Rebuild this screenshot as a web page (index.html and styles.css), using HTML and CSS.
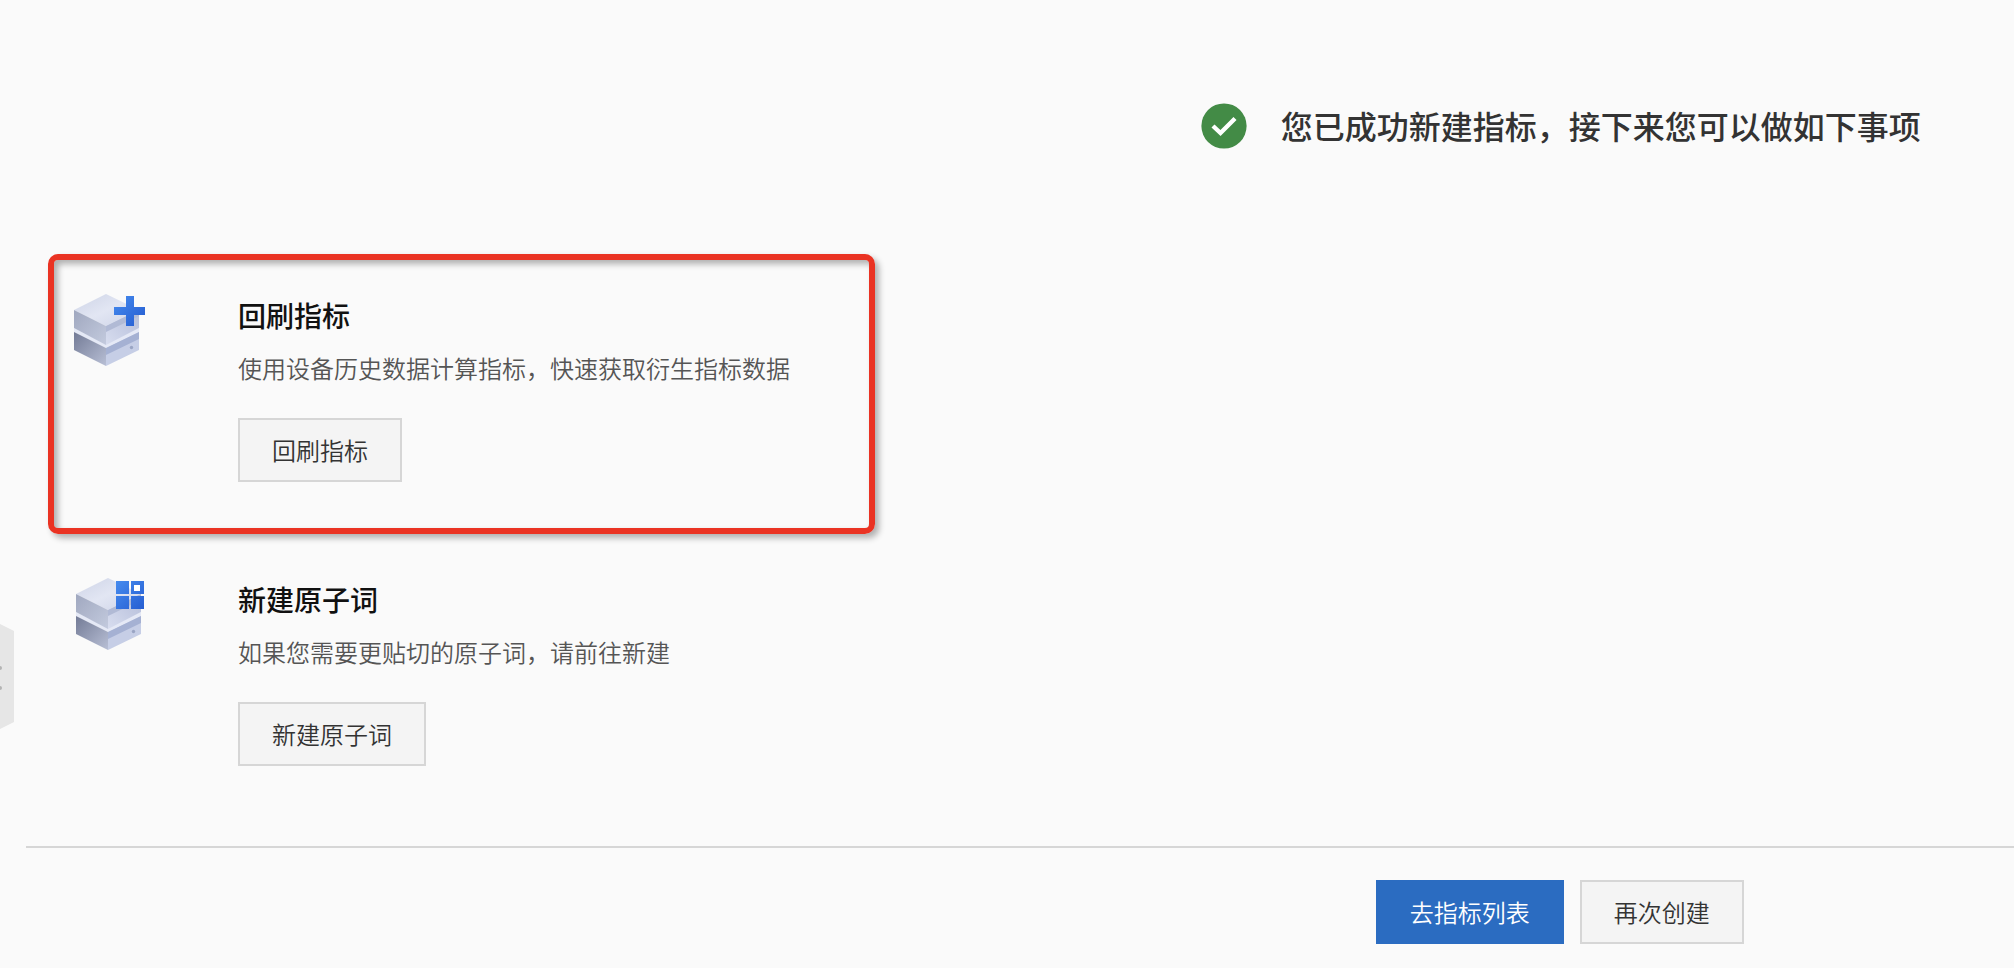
FILE: index.html
```html
<!doctype html>
<html lang="zh-CN">
  <head>
    <meta charset="utf-8">
    <title>新建指标</title>
    <link rel="stylesheet" href="styles.css">
  </head>
  <body>
    <button class="drawer-handle" type="button" aria-label="展开">
      <svg viewBox="0 0 14 106">
        <path d="M0 0L14 7V98L0 105Z" fill="#e6e6e6" />
        <circle cx="0" cy="44" r="2" fill="#b4b4b4" />
        <circle cx="0" cy="64" r="2" fill="#b4b4b4" />
      </svg>
    </button>

    <header class="result">
      <svg class="result-icon" viewBox="0 0 46 46">
        <circle cx="23" cy="23" r="22.6" fill="#438b46" />
        <path d="M12 23L19.5 30L34 15.5" fill="none" stroke="#fff" stroke-width="4.4" />
      </svg>
      <h1>您已成功新建指标，接下来您可以做如下事项</h1>
    </header>

    <main class="actions">
      <section class="action highlighted">
        <svg class="action-icon" viewBox="0 0 72 72">
          <defs>
            <linearGradient id="top" x1="0" y1="0" x2="1" y2="1">
              <stop offset="0" stop-color="#cdd3e6" />
              <stop offset=".5" stop-color="#e2e6f3" />
              <stop offset="1" stop-color="#cdd3e7" />
            </linearGradient>
            <linearGradient id="left" x1="0" y1="0" x2="1" y2="1">
              <stop offset="0" stop-color="#a0a8bf" />
              <stop offset="1" stop-color="#c3cade" />
            </linearGradient>
            <linearGradient id="right" x1="0" y1="1" x2="1" y2="0">
              <stop offset="0" stop-color="#d8ddef" />
              <stop offset="1" stop-color="#b4bdd9" />
            </linearGradient>
            <linearGradient id="dark" x1="0" y1="0" x2="1" y2="1">
              <stop offset="0" stop-color="#737b96" />
              <stop offset="1" stop-color="#b8bfd5" />
            </linearGradient>
            <linearGradient id="blue" gradientUnits="userSpaceOnUse" x1="42" y1="4" x2="70" y2="32">
              <stop offset="0" stop-color="#4489ed" />
              <stop offset="1" stop-color="#245bd0" />
            </linearGradient>
            <g id="server">
              <path d="M0 34V38L32 54L65 38V34L32 50Z" fill="#e5e9f6" />
              <path d="M0 16L32 0L65 16L32 32Z" fill="url(#top)" />
              <path d="M0 16L32 32V51L0 34Z" fill="url(#left)" />
              <path d="M32 32L65 16V34L32 51Z" fill="url(#right)" />
              <path d="M32 32L65 16V22L32 38Z" fill="#b1bad5" />
              <path d="M0 38L32 54V72L0 56Z" fill="url(#dark)" />
              <path d="M32 54L65 38V56L32 72Z" fill="#c6cee6" />
              <path d="M32 54L65 38V45L32 61Z" fill="#a5b1d3" />
              <circle cx="57.5" cy="53.5" r="1.7" fill="#9aa5c4" />
            </g>
          </defs>
          <use href="#server" />
          <path d="M52 2H60V13H71V21H60V32H52V21H40V13H52Z" fill="url(#blue)" />
        </svg>
        <div class="action-body">
          <h2>回刷指标</h2>
          <p>使用设备历史数据计算指标，快速获取衍生指标数据</p>
          <button class="btn" type="button">回刷指标</button>
        </div>
      </section>

      <section class="action">
        <svg class="action-icon" viewBox="-2 0 72 72">
          <use href="#server" />
          <path d="M40 3H53V16H40ZM55 3H68V16H55ZM40 18H53V31H40ZM55 18H68V31H55Z" fill="url(#blue)" />
          <path d="M58 7H64V13H58Z" fill="#fff" />
        </svg>
        <div class="action-body">
          <h2>新建原子词</h2>
          <p>如果您需要更贴切的原子词，请前往新建</p>
          <button class="btn" type="button">新建原子词</button>
        </div>
      </section>
    </main>

    <footer class="footer">
      <button class="btn btn-primary" type="button">去指标列表</button>
      <button class="btn" type="button">再次创建</button>
    </footer>
  </body>
</html>
```
FILE: styles.css
```css
:root {
  --primary: #2b6cc1;
  --background: #fafafa;
  --border: #d6d6d6;
}

* {
  box-sizing: border-box;
}

body {
  margin: 0;
  background: var(--background);
  color: #333;
  font-family: "Noto Sans CJK SC", sans-serif;
  font-size: 24px;
  font-weight: 350;
}

h1,
h2,
p {
  margin: 0;
}

.drawer-handle {
  position: absolute;
  top: 624px;
  left: 0;
  padding: 0;
  border: 0;
  background: none;
  cursor: pointer;
}

.drawer-handle svg {
  display: block;
  width: 14px;
  height: 106px;
}

.result {
  display: flex;
  justify-content: center;
  align-items: center;
  gap: 34px;
  padding: 102px 0 104px 55%;
}

.result-icon {
  flex: none;
  width: 46px;
  height: 46px;
}

h1 {
  padding-bottom: 2px;
  font-size: 32px;
  font-weight: 500;
  line-height: 46px;
  white-space: nowrap;
}

.actions {
  display: flex;
  flex-direction: column;
  gap: 4px;
  padding: 0 48px;
}

.action {
  display: flex;
  gap: 92px;
  max-width: 827px;
  min-height: 280px;
  padding: 34px 20px;
  border: 6px solid transparent;
  border-radius: 10px;
}

.highlighted {
  border-color: #ea3323;
  box-shadow:
    4px 4px 6px rgba(0, 0, 0, 0.3),
    inset 4px 4px 6px rgba(0, 0, 0, 0.3);
}

.action-icon {
  flex: none;
  width: 72px;
  height: 72px;
}

.action-body {
  display: flex;
  flex-direction: column;
  align-items: flex-start;
}

h2 {
  color: #111;
  font-size: 28px;
  font-weight: 500;
  line-height: 42px;
}

p {
  margin: 12px 0 30px;
  color: #555;
  line-height: 40px;
}

.btn {
  height: 64px;
  padding: 0 32px 2px;
  border: 2px solid var(--border);
  background: #f4f4f4;
  color: #333;
  font: inherit;
  cursor: pointer;
}

.btn-primary {
  border-color: var(--primary);
  background: var(--primary);
  color: #fff;
}

.footer {
  display: flex;
  justify-content: center;
  gap: 16px;
  margin: 28px 0 0 26px;
  padding: 32px 0 24px calc(55% - 28px);
  border-top: 2px solid var(--border);
}
```
